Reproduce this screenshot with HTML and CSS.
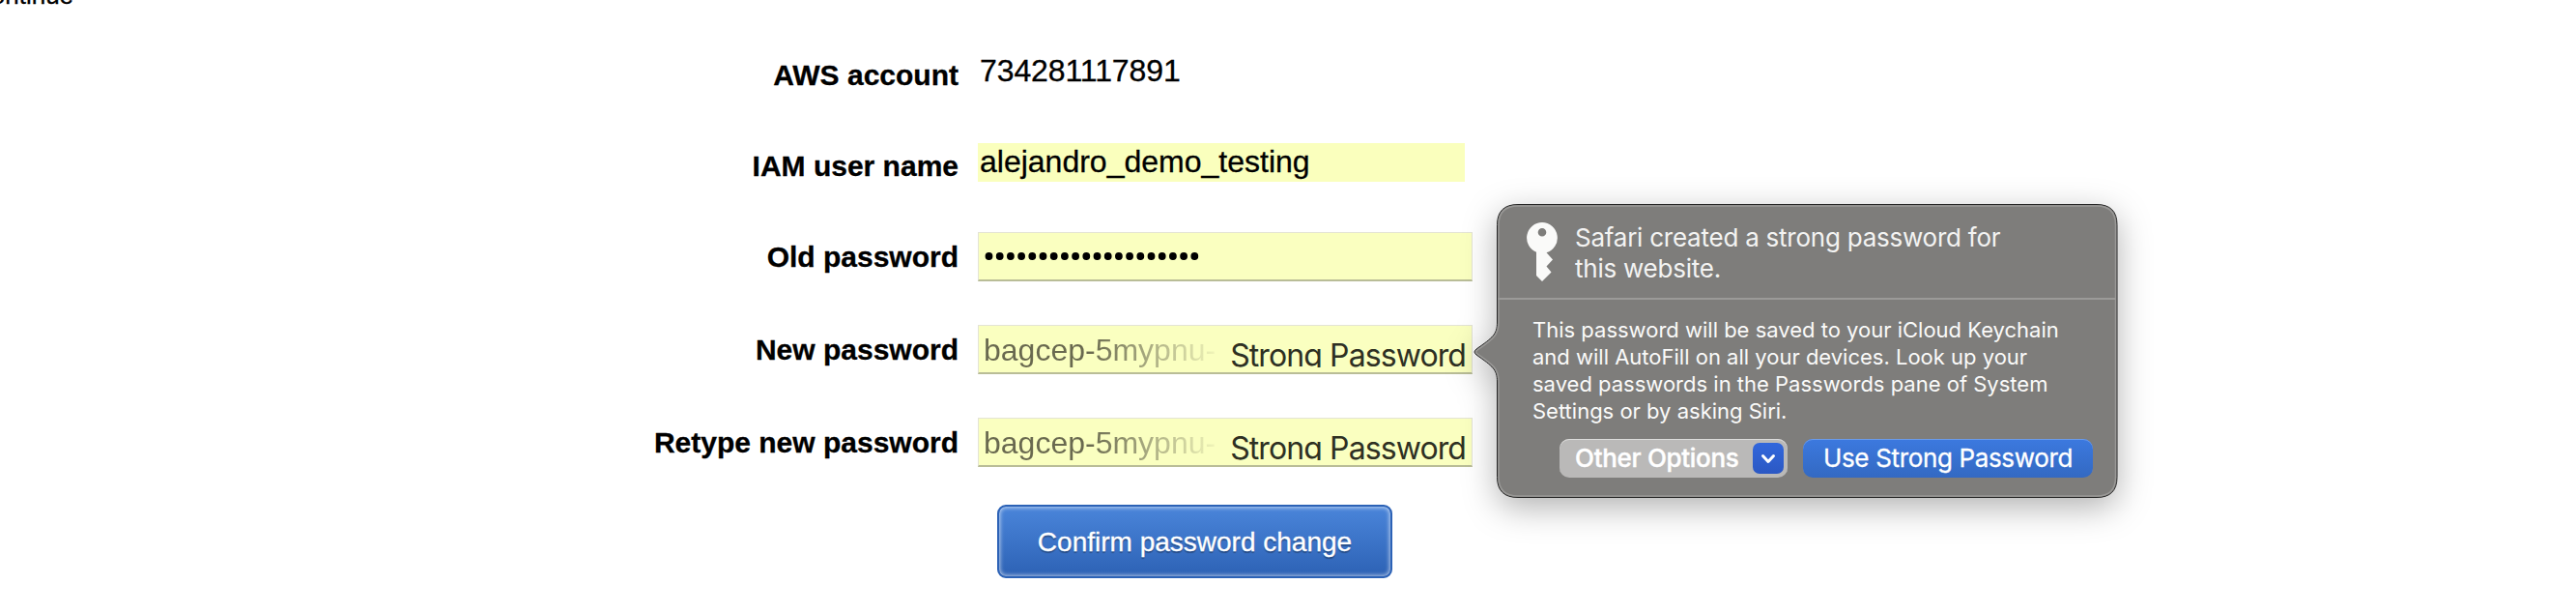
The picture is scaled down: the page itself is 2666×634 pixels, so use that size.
FILE: index.html
```
<!DOCTYPE html>
<html lang="en">
<head>
<meta charset="utf-8">
<title>Change password</title>
<link rel="stylesheet" href="styles.css">
</head>
<body>
<main class="page">
  <div class="notice"><span>Continue</span></div>
  <form class="form">
    <div class="row row-account"><label class="label">AWS account</label><span class="value v1">734281117891</span></div>
    <div class="row row-user"><label class="label">IAM user name</label><span class="value filled">alejandro_demo_testing</span></div>
    <div class="row"><label class="label">Old password</label>
      <div class="field"><svg class="dots" width="230" height="10" viewBox="0 0 230 10"><path d="M4.5 5H222" fill="none" stroke="#000" stroke-width="7.8" stroke-linecap="round" stroke-dasharray="0 11.2"/></svg></div></div>
    <div class="row"><label class="label">New password</label>
      <div class="field"><span class="generated">bagcep-5mypnu-</span><span class="strong">Strong Password</span></div></div>
    <div class="row"><label class="label">Retype new password</label>
      <div class="field"><span class="generated">bagcep-5mypnu-</span><span class="strong">Strong Password</span></div></div>
    <button class="confirm" type="button"><span>Confirm password change</span></button>
  </form>
  <aside class="popover">
    <svg class="bubble" width="668" height="306" viewBox="0 0 668 306">
      <path d="M46 .5H645Q666 .5 666 21.500V282.500Q666 303.500 645 303.500H46Q24.500 303.500 24.500 282.500V184C24.500 171 20 168 3 156Q-1 153 3 150C20 138 24.500 135 24.500 122V21.500Q24.500 .5 46 .5Z" fill="#7e7d7b" stroke="#262626"/>
      <path d="M46 2H645Q664.500 2 664.500 21.500V282.500Q664.500 302 645 302H46Q26 302 26 282.500V184C26 170 20 166 4 155Q1 153 4 151C20 140 26 136 26 122V21.500Q26 2 46 2Z" fill="none" stroke="#999896" stroke-width="1.500"/>
    </svg>
    <header class="head">
      <svg class="key" width="34" height="64" viewBox="0 0 34 64"><path fill="#fafaf9" fill-rule="evenodd" d="M17 1A16 16 0 0 1 21.500 32.300L28 39.500L21.500 46.500L26.500 52.500L17 62L11 56V31.800A16 16 0 0 1 17 1ZM17 7A4.300 4.300 0 1 0 17 15.600A4.300 4.300 0 1 0 17 7Z"/></svg>
      <div class="title"><span>Safari created a strong password for</span><span>this website.</span></div>
    </header>
    <div class="body">
      <span>This password will be saved to your iCloud Keychain</span>
      <span>and will AutoFill on all your devices. Look up your</span>
      <span>saved passwords in the Passwords pane of System</span>
      <span>Settings or by asking Siri.</span>
    </div>
    <div class="actions">
      <button class="other" type="button"><span>Other Options</span><i class="chev"><svg width="32" height="32" viewBox="0 0 32 32"><path d="M10.500 13.500L16 19.500L21.500 13.500" fill="none" stroke="#fff" stroke-width="3" stroke-linecap="round" stroke-linejoin="round"/></svg></i></button>
      <button class="use" type="button"><span>Use Strong Password</span></button>
    </div>
  </aside>
</main>
</body>
</html>
```
FILE: styles.css
```
* { box-sizing: border-box; }
body { margin: 0; background: #fff; color: #000; font-family: "Liberation Sans", Arial, sans-serif; }
button { border: 0; padding: 0; margin: 0; font: inherit; }
.page { position: relative; width: 2666px; height: 634px; overflow: hidden; }
.notice { height: 48px; overflow: hidden; font-size: 26px; line-height: 30px; -webkit-text-stroke: .3px #000; }
.notice span { display: block; margin: -20px 0 0 -28px; }
.form { display: flex; flex-direction: column; }
.row { display: grid; grid-template-columns: 992px 512px; column-gap: 20px; height: 96px; align-items: start; }
.row-account { height: 100px; }
.row-user { height: 92px; }
.label { justify-self: end; white-space: nowrap; font-size: 30px; font-weight: 700; line-height: 40px; margin-top: 6px; -webkit-text-stroke: .3px #000; }
.row-account .label { margin-top: 10px; }
.row-user .label { margin-top: 4px; }
.value { font-size: 32px; line-height: 40px; padding-left: 2px; white-space: nowrap; letter-spacing: -.1px; -webkit-text-stroke: .3px #000; }
.v1 { margin-top: 5px; }
.filled { width: 504px; height: 40px; background: #faffbd; line-height: 39px; letter-spacing: 0; }
.field { display: flex; justify-content: space-between; width: 512px; height: 51px; overflow: hidden; background: #faffc0; border: 1px solid #e4e4d5; border-bottom: 2px solid #b9bd97; }
.dots { margin: 19px 0 0 6px; }
.generated { margin: 6px 0 0 5px; width: 242px; flex: none; font-size: 32px; line-height: 38px; color: transparent; white-space: nowrap; background: linear-gradient(90deg, #69694f 0, #69694f 45%, #faffc0 103%); -webkit-background-clip: text; background-clip: text; }
.strong { flex: none; height: 43px; overflow: hidden; margin-right: 6px; padding-top: 9px; font-family: Inter, sans-serif; font-size: 32px; line-height: 43px; letter-spacing: -.9px; color: #2e3023; white-space: nowrap; }
.confirm { width: 409px; height: 76px; margin: -6px 0 0 1032px; border: 2px solid #2c62b6; border-radius: 9px; background: linear-gradient(#4a85da, #2d62b5); box-shadow: inset 0 0 4px 1px rgba(255,255,255,.65); color: #fff; font-size: 28px; text-shadow: 0 2px 1px rgba(0,0,0,.3); -webkit-text-stroke: .3px #fff; }
.confirm span { position: relative; top: 1px; }
.popover { position: absolute; left: 1525px; top: 211px; width: 668px; height: 306px; color: #f3f3f2; font-family: Inter, sans-serif; }
.bubble { position: absolute; left: 0; top: 0; overflow: visible; filter: drop-shadow(0 10px 17px rgba(0,0,0,.3)); }
.head { position: relative; display: flex; height: 99px; margin: 0 3px 0 25px; padding: 18px 0 0 29px; border-bottom: 2px solid #9b9a98; font-size: 26px; line-height: 32px; letter-spacing: -.24px; }
.title { display: grid; align-content: start; margin: 1px 0 0 17px; }
.title span, .body span, .actions span { white-space: nowrap; justify-self: start; }
.body { position: relative; display: grid; margin: 17px 0 0 61px; font-size: 22px; line-height: 28px; color: #fafaf9; }
.actions { position: relative; display: flex; gap: 16px; margin: 15px 0 0 89px; font-size: 26px; letter-spacing: -.35px; }
.other { display: flex; align-items: center; justify-content: space-between; width: 236px; height: 40px; padding: 0 4px 0 16px; border-radius: 10px; background: #bab9b8; box-shadow: inset 0 1px #dcdcdb; color: #fff; font-weight: 500; letter-spacing: -.3px; -webkit-text-stroke: .4px #fff; }
.other span, .use span { position: relative; top: -1px; }
.chev { display: block; width: 32px; height: 32px; border-radius: 7px; background: linear-gradient(#3267dc, #2b58c3); }
.chev svg { display: block; }
.use { width: 300px; height: 40px; border-radius: 10px; background: linear-gradient(#3c79df, #3369c2); box-shadow: inset 0 1px #6b9bea; color: #fff; letter-spacing: -.35px; -webkit-text-stroke: .3px #fff; }
```
